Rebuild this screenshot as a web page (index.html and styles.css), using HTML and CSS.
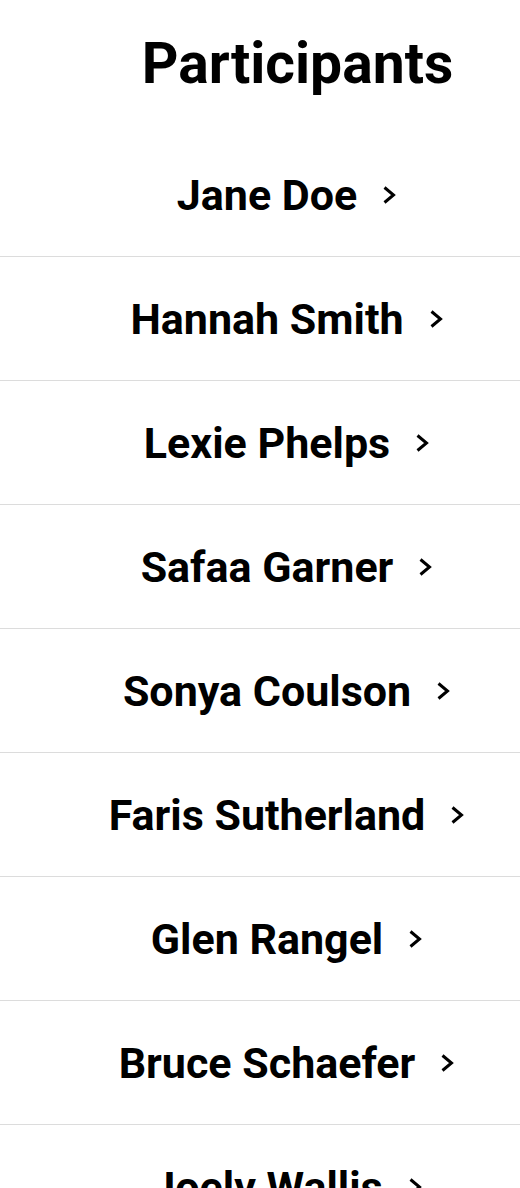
FILE: index.html
```html
<html>
<head>
  <title>Participants</title>
  <link rel="stylesheet" href="styles.css">
</head>
<body>
<header class="page-header">
  <h1>Participants</h1>
</header>
<ul class="participants">
  <li class="participant"><span class="name">Jane Doe</span><svg class="chevron" viewBox="0 0 14 20"><polyline points="2.5,2.5 11.5,10 2.5,17.5"/></svg></li>
  <li class="participant"><span class="name">Hannah Smith</span><svg class="chevron" viewBox="0 0 14 20"><polyline points="2.5,2.5 11.5,10 2.5,17.5"/></svg></li>
  <li class="participant"><span class="name">Lexie Phelps</span><svg class="chevron" viewBox="0 0 14 20"><polyline points="2.5,2.5 11.5,10 2.5,17.5"/></svg></li>
  <li class="participant"><span class="name">Safaa Garner</span><svg class="chevron" viewBox="0 0 14 20"><polyline points="2.5,2.5 11.5,10 2.5,17.5"/></svg></li>
  <li class="participant"><span class="name">Sonya Coulson</span><svg class="chevron" viewBox="0 0 14 20"><polyline points="2.5,2.5 11.5,10 2.5,17.5"/></svg></li>
  <li class="participant"><span class="name">Faris Sutherland</span><svg class="chevron" viewBox="0 0 14 20"><polyline points="2.5,2.5 11.5,10 2.5,17.5"/></svg></li>
  <li class="participant"><span class="name">Glen Rangel</span><svg class="chevron" viewBox="0 0 14 20"><polyline points="2.5,2.5 11.5,10 2.5,17.5"/></svg></li>
  <li class="participant"><span class="name">Bruce Schaefer</span><svg class="chevron" viewBox="0 0 14 20"><polyline points="2.5,2.5 11.5,10 2.5,17.5"/></svg></li>
  <li class="participant"><span class="name">Joely Wallis</span><svg class="chevron" viewBox="0 0 14 20"><polyline points="2.5,2.5 11.5,10 2.5,17.5"/></svg></li>
</ul>
</body>
</html>
```

FILE: styles.css
```css
body {
  margin: 0;
  background: white;
  color: black;
  font-family: Roboto, "Liberation Sans", sans-serif;
}
.page-header {
  height: 127px;
  display: flex;
  align-items: center;
  justify-content: center;
  padding: 0 0 6px 75px;
}
.page-header h1 {
  margin: 0;
  font-size: 57px;
  font-weight: 700;
}
.participants {
  list-style: none;
  margin: 0;
  padding: 0;
}
.participant {
  display: grid;
  grid-template-columns: 1fr auto 1fr;
  align-items: center;
  height: 123px;
  padding-left: 14px;
  border-bottom: 1px solid #dcdcdc;
}
.participant .name {
  grid-column: 2;
  font-size: 43px;
  font-weight: 700;
}
.participant .chevron {
  grid-column: 3;
  justify-self: start;
  margin-left: 25px;
  width: 14px;
  height: 20px;
  fill: none;
  stroke: black;
  stroke-width: 3;
}
```
